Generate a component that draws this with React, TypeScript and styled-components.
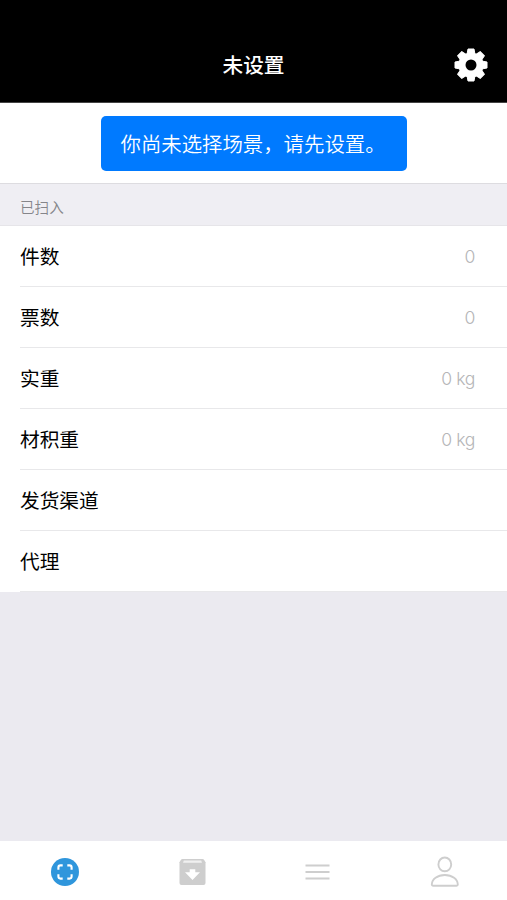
import React from "react";
import styled, { createGlobalStyle } from "styled-components";

const GlobalStyle = createGlobalStyle`
  * { box-sizing: border-box; }
  body { margin: 0; background: #ebeaf0; font-family: "Noto Sans CJK SC", "Noto Sans", sans-serif; }
`;

const Screen = styled.div`
  display: flex;
  flex-direction: column;
  width: 100%;
  height: 100vh;
  background: #ebeaf0;
`;

const Header = styled.header`
  display: grid;
  grid-template-columns: 1fr auto 1fr;
  align-items: center;
  height: 103px;
  padding: 27px 19px 0;
  background: #000;
  color: #fff;
  border-bottom: 1px solid #444;
`;

const Title = styled.h1`
  grid-column: 2;
  margin: 0;
  padding-bottom: 2px;
  font-size: 20.7px;
  font-weight: 500;
  line-height: 30px;
`;

const SettingsButton = styled.button`
  justify-self: end;
  display: flex;
  padding: 0;
  border: 0;
  background: none;
  color: #fff;
`;

const Notice = styled.section`
  display: flex;
  justify-content: center;
  height: 80px;
  padding-top: 13px;
  background: #fff;
`;

const NoticeButton = styled.button`
  width: 306px;
  height: 55px;
  padding: 0 0 2px 20px;
  border: 0;
  border-radius: 5px;
  background: #007aff;
  color: #fff;
  font-family: inherit;
  font-size: 20.4px;
  font-weight: 350;
  text-align: left;
  white-space: nowrap;
`;

const SectionTitle = styled.h2`
  display: flex;
  align-items: center;
  height: 43px;
  margin: 0;
  padding: 3px 20px 0;
  border-top: 1px solid #dddce0;
  border-bottom: 1px solid #e6e5e9;
  background: #efeef3;
  color: #85858a;
  font-size: 14.6px;
  font-weight: 350;
`;

const List = styled.ul`
  margin: 0;
  padding: 0 0 0 20px;
  list-style: none;
  background: #fff;
`;

const Row = styled.li`
  display: flex;
  align-items: center;
  justify-content: space-between;
  height: 61px;
  padding-right: 32px;
  border-bottom: 1px solid #e8e8ea;
  color: #000;
`;

const Label = styled.span`
  padding-bottom: 2px;
  font-size: 19.7px;
`;

const Value = styled.span`
  color: #b5b5b7;
  font-family: Inter, "Liberation Sans", sans-serif;
  font-size: 17.6px;
  font-weight: 300;
  letter-spacing: -0.4px;
`;

const TabBar = styled.nav`
  display: grid;
  grid-template-columns: repeat(4, 1fr);
  height: 59px;
  margin-top: auto;
  background: #fff;
`;

const Tab = styled.button<{ $active?: boolean }>`
  display: flex;
  align-items: center;
  justify-content: center;
  padding: 3px 0 0 3px;
  border: 0;
  background: none;
  color: ${(p) => (p.$active ? "#2f96dc" : "#cecece")};
`;

const GearIcon = () => (
  <svg width="34" height="34" viewBox="-17 -17 34 34" fill="currentColor">
    {[0, 45, 90, 135].map((angle) => (
      <path
        key={angle}
        transform={`rotate(${angle})`}
        d="M-3-16H3L4.1-10V10L3 16H-3L-4.1 10V-10Z"
        stroke="currentColor"
        strokeWidth="1"
        strokeLinejoin="round"
      />
    ))}
    <circle r="12.6" />
    <circle r="5.5" fill="#000" />
  </svg>
);

const ScanIcon = () => (
  <svg width="30" height="30" viewBox="0 0 30 30">
    <circle cx="15" cy="15" r="14" fill="currentColor" />
    <path
      d="M8.4 12.7V10.4Q8.4 8.4 10.4 8.4H12.7M17.3 8.4H19.6Q21.6 8.4 21.6 10.4V12.7M21.6 17.3V19.6Q21.6 21.6 19.6 21.6H17.3M12.7 21.6H10.4Q8.4 21.6 8.4 19.6V17.3"
      fill="none"
      stroke="#fff"
      strokeWidth="2.1"
    />
  </svg>
);

const ArchiveIcon = () => (
  <svg width="30" height="30" viewBox="0 0 30 30">
    <path d="M5.5 2H25.5Q26.5 2 27.2 3L28.5 5.3V26Q28.5 28 26.5 28H4.5Q2.5 28 2.5 26V5.3L3.8 3Q4.5 2 5.5 2Z" fill="currentColor" />
    <path d="M6.8 3.4H24.2L25 5.7H6Z" fill="#f0f0f0" />
    <path d="M12.7 12.3H18.3V15.2H23L15.5 23L8 15.2H12.7Z" fill="#fff" />
  </svg>
);

const MenuIcon = () => (
  <svg width="30" height="30" viewBox="0 0 30 30">
    <path d="M2.5 8.5H26.5M2.5 15H26.5M2.5 21.5H26.5" fill="none" stroke="currentColor" strokeWidth="2.1" />
  </svg>
);

const PersonIcon = () => (
  <svg width="32" height="34" viewBox="0 0 32 34" fill="none" stroke="currentColor" strokeWidth="1.9" strokeLinejoin="round">
    <ellipse cx="15.8" cy="9.4" rx="6.4" ry="6.9" />
    <path d="M2.8 29.6Q2.8 30.8 4 30.8H27.6Q28.8 30.8 28.8 29.6C28.8 24.1 23.1 20 15.8 20S2.8 24.1 2.8 29.6Z" />
  </svg>
);

const rows = [
  { label: "件数", value: "0" },
  { label: "票数", value: "0" },
  { label: "实重", value: "0 kg" },
  { label: "材积重", value: "0 kg" },
  { label: "发货渠道", value: "" },
  { label: "代理", value: "" },
];

export default function App() {
  return (
    <Screen>
      <GlobalStyle />
      <Header>
        <Title>未设置</Title>
        <SettingsButton aria-label="设置"><GearIcon /></SettingsButton>
      </Header>
      <Notice>
        <NoticeButton>你尚未选择场景，请先设置。</NoticeButton>
      </Notice>
      <SectionTitle>已扫入</SectionTitle>
      <List>
        {rows.map((row) => (
          <Row key={row.label}>
            <Label>{row.label}</Label>
            {row.value && <Value>{row.value}</Value>}
          </Row>
        ))}
      </List>
      <TabBar>
        <Tab $active><ScanIcon /></Tab>
        <Tab><ArchiveIcon /></Tab>
        <Tab><MenuIcon /></Tab>
        <Tab><PersonIcon /></Tab>
      </TabBar>
    </Screen>
  );
}
